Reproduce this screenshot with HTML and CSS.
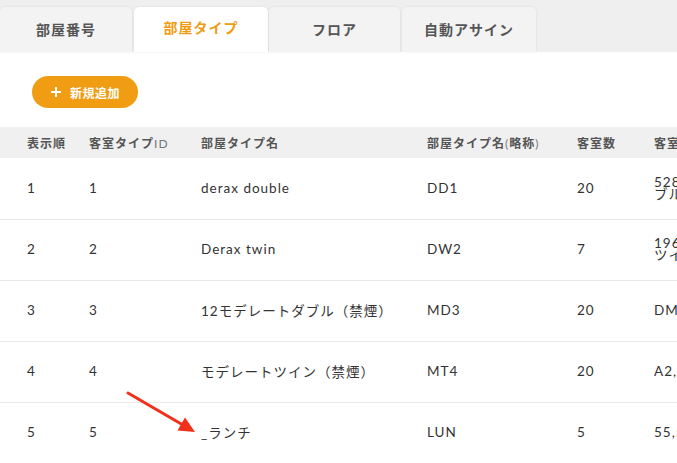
FILE: index.html
```html
<!DOCTYPE html>
<html lang="ja">
<head>
<meta charset="utf-8">
<link rel="stylesheet" href="styles.css">
</head>
<body>
<div class="page">
  <nav class="tabs">
    <div class="tab t1">部屋番号</div>
    <div class="tab t2 active">部屋タイプ</div>
    <div class="tab t3">フロア</div>
    <div class="tab t4">自動アサイン</div>
  </nav>
  <div class="content">
    <button class="add-btn">
      <svg class="plus" width="10" height="10" viewBox="0 0 10 10"><path d="M5 0V10M0 5H10" stroke="#fff" stroke-width="2"/></svg>
      <span>新規追加</span>
    </button>
    <div class="table-wrap">
      <table class="grid">
        <colgroup>
          <col class="c1"><col class="c2"><col class="c3"><col class="c4"><col class="c5"><col class="c6">
        </colgroup>
        <thead>
          <tr>
            <th>表示順</th>
            <th>客室タイプ<span class="lt">ID</span></th>
            <th>部屋タイプ名</th>
            <th>部屋タイプ名<span class="lt">(</span>略称<span class="lt">)</span></th>
            <th>客室数</th>
            <th>客室番号</th>
          </tr>
        </thead>
        <tbody>
          <tr><td>1</td><td>1</td><td>derax double</td><td>DD1</td><td>20</td><td class="multi">528,529,530,531<br>ブルーム</td></tr>
          <tr><td>2</td><td>2</td><td>Derax twin</td><td>DW2</td><td>7</td><td class="multi">196,197,198<br>ツイン</td></tr>
          <tr><td>3</td><td>3</td><td>12モデレートダブル（禁煙）</td><td>MD3</td><td>20</td><td>DMD1,DMD2</td></tr>
          <tr><td>4</td><td>4</td><td>モデレートツイン（禁煙）</td><td>MT4</td><td>20</td><td>A2,A3,A4</td></tr>
          <tr><td>5</td><td>5</td><td>_ランチ</td><td>LUN</td><td>5</td><td>55,56,57</td></tr>
        </tbody>
      </table>
    </div>
  </div>
  <svg class="arrow" width="677" height="463" viewBox="0 0 677 463">
    <line x1="128" y1="393" x2="183" y2="425" stroke="#f0301a" stroke-width="3" stroke-linecap="round"/>
    <polygon points="195,432 177.5,430.5 185,417.5" fill="#f0301a"/>
  </svg>
</div>
</body>
</html>
```

FILE: styles.css
```css
* { box-sizing: border-box; }
html, body {
  margin: 0;
  padding: 0;
  background: #fff;
  overflow: hidden;
}
body {
  font-family: Lato, "Noto Sans CJK JP", sans-serif;
  color: #333;
  width: 677px;
  height: 463px;
}
.page {
  position: relative;
  width: 677px;
  height: 463px;
  overflow: hidden;
}
.tabs {
  display: flex;
  align-items: flex-end;
  gap: 2px;
  height: 52px;
  padding-top: 7px;
  background: #efefef;
}
.tab {
  height: 45px;
  display: flex;
  align-items: center;
  justify-content: center;
  background: #f3f3f3;
  border-radius: 5px 5px 0 0;
  box-shadow: 0 0 3px rgba(0,0,0,0.08);
  font-family: "Noto Sans CJK JP", sans-serif;
  font-weight: 700;
  font-size: 14px;
  letter-spacing: 1px;
  color: #555;
  padding-bottom: 2px;
}
.t1 { width: 132px; }
.t2 { width: 134px; }
.t3 { width: 131px; margin-left: -1px; }
.t4 { width: 134px; }
.tab.active {
  background: #fff;
  color: #f09c12;
  padding-bottom: 5px;
}
.content {
  padding-top: 24px;
}
.add-btn {
  margin-left: 32px;
  width: 106px;
  height: 32px;
  border: none;
  border-radius: 16px;
  background: #f09d13;
  color: #fff;
  display: flex;
  align-items: center;
  padding: 0 0 0 19px;
  gap: 9px;
  font-family: "Noto Sans CJK JP", sans-serif;
  font-weight: 700;
  font-size: 12px;
  letter-spacing: 0.5px;
  cursor: pointer;
}
.plus { flex: none; }
.table-wrap {
  margin-top: 19px;
  width: 677px;
  overflow: hidden;
}
.grid {
  table-layout: fixed;
  width: 900px;
  border-collapse: collapse;
}
.c1 { width: 89px; }
.c2 { width: 112px; }
.c3 { width: 226px; }
.c4 { width: 150px; }
.c5 { width: 77px; }
.c6 { width: 246px; }
.grid th, .grid td {
  text-align: left;
  padding: 0;
  white-space: nowrap;
  overflow: hidden;
}
.grid th:first-child, .grid td:first-child { padding-left: 27px; }
.grid thead th {
  height: 31px;
  background: #f0f0f0;
  font-family: "Noto Sans CJK JP", sans-serif;
  font-weight: 700;
  font-size: 12px;
  letter-spacing: 1px;
  color: #555;
}
.grid thead .lt {
  font-family: Lato, sans-serif;
  font-weight: 400;
  color: #777;
}
.grid tbody td {
  height: 61px;
  border-bottom: 1px solid #e9e9e9;
  font-size: 13.5px;
  letter-spacing: 1px;
  color: #333;
  padding-bottom: 1px;
}
.grid tbody td.multi {
  line-height: 12px;
}
.arrow {
  position: absolute;
  left: 0;
  top: 0;
  pointer-events: none;
}
```
